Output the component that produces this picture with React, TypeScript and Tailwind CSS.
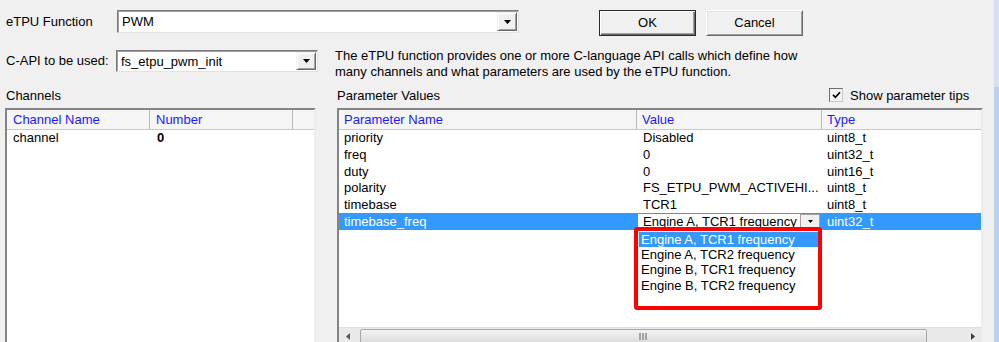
import React from "react";

const FONT = "font-['Liberation_Sans',Arial,sans-serif]";

const DownArrow = ({ small }: { small?: boolean }) =>
  small ? (
    <svg width="5" height="3" viewBox="0 0 5 3">
      <path d="M0 0H5L2.5 3Z" fill="#000" />
    </svg>
  ) : (
    <svg width="7" height="4" viewBox="0 0 7 4">
      <path d="M0 0H7L3.5 4Z" fill="#000" />
    </svg>
  );

// classic raised button face used inside the combo boxes
const ComboButton = ({ className }: { className: string }) => (
  <div
    className={`flex items-center justify-center bg-[#f0f0f0] border border-t-[#f0f0f0] border-l-[#f0f0f0] border-r-[#696969] border-b-[#696969] shadow-[inset_1px_1px_0_#ffffff,inset_-1px_-1px_0_#a0a0a0] ${className}`}
  >
    <DownArrow />
  </div>
);

const Combo = ({ className, value }: { className: string; value: string }) => (
  <div
    className={`flex bg-white border border-t-[#7a7a7a] border-l-[#7a7a7a] border-r-[#e3e3e3] border-b-[#e3e3e3] shadow-[inset_1px_1px_0_#a0a0a0] ${className}`}
  >
    <div className="flex-1 flex items-center pl-[4px] leading-none">{value}</div>
    <ComboButton className="w-[20px] my-[1px] mr-[1px]" />
  </div>
);

const rows = [
  { name: "priority", value: "Disabled", type: "uint8_t", h: "h-[16px]" },
  { name: "freq", value: "0", type: "uint32_t", h: "h-[17px]" },
  { name: "duty", value: "0", type: "uint16_t", h: "h-[17px]" },
  { name: "polarity", value: "FS_ETPU_PWM_ACTIVEHI...", type: "uint8_t", h: "h-[16px]" },
  { name: "timebase", value: "TCR1", type: "uint8_t", h: "h-[17px]" },
];

const options = [
  { label: "Engine A, TCR1 frequency", h: "h-[15px]", on: true },
  { label: "Engine A, TCR2 frequency", h: "h-[15px]", on: false },
  { label: "Engine B, TCR1 frequency", h: "h-[16px]", on: false },
  { label: "Engine B, TCR2 frequency", h: "h-[16px]", on: false },
];

const HeaderCell = ({ className, label }: { className: string; label: string }) => (
  <div className={`flex items-center text-[#1a1aff] border-r border-[#b9b9b9] ${className}`}>
    {label}
  </div>
);

export default function App() {
  return (
    <div className={`w-[999px] h-[342px] overflow-hidden flex bg-[#f0f0f0] text-[13px] text-black ${FONT}`}>
      <div className="w-[994px] flex flex-col">
        {/* eTPU function row */}
        <div className="shrink-0 flex items-start pt-[10px]">
          <div className="w-[117px] h-[23px] pl-[6px] flex items-center">eTPU Function</div>
          <Combo className="w-[402px] h-[23px]" value="PWM" />
          <div className="ml-[80px] flex gap-[10px]">
            <button className="w-[97px] h-[26px] bg-[#f0f0f0] border border-[#2a2a2a] shadow-[inset_1px_1px_0_#ffffff,inset_-1px_-1px_0_#696969,inset_-2px_-2px_0_#a0a0a0]">
              OK
            </button>
            <button className="w-[97px] h-[26px] bg-[#f0f0f0] border border-t-white border-l-white border-r-[#696969] border-b-[#696969] shadow-[inset_1px_1px_0_#e3e3e3,inset_-1px_-1px_0_#a0a0a0]">
              Cancel
            </button>
          </div>
        </div>

        {/* C-API row */}
        <div className="shrink-0 flex items-start mt-[12px]">
          <div className="w-[116px] h-[22px] mt-[2px] pl-[6px] flex items-center">C-API to be used:</div>
          <Combo className="w-[202px] h-[22px] mt-[2px]" value="fs_etpu_pwm_init" />
          <div className="ml-[17px] leading-[16px]">
            <div>The eTPU function provides one or more C-language API calls which define how</div>
            <div>many channels and what parameters are used by the eTPU function.</div>
          </div>
        </div>

        {/* section labels */}
        <div className="shrink-0 flex items-start mt-[8px] h-[20px] leading-[16px]">
          <div className="w-[337px] pl-[6px]">Channels</div>
          <div className="w-[492px]">Parameter Values</div>
          <div className="w-[14px] h-[14px] bg-[#f4f4f4] border border-t-[#6d6d6d] border-l-[#6d6d6d] border-r-[#c8c8c8] border-b-[#c8c8c8] flex items-center justify-center">
            <svg width="9" height="8" viewBox="0 0 9 8">
              <path d="M1 3.8L3.4 6.3L8 1.2" stroke="#000" strokeWidth="1.7" fill="none" />
            </svg>
          </div>
          <div className="ml-[7px]">Show parameter tips</div>
        </div>

        {/* list boxes */}
        <div className="shrink-0 flex items-start">
          {/* channels */}
          <div className="ml-[5px] w-[311px] h-[238px] flex flex-col bg-white border-2 border-t-[#848484] border-l-[#848484] border-r-[#ececec] border-b-[#ececec]">
            <div className="h-[20px] flex bg-[#f5f5f5] border-b border-[#c9c9c9]">
              <HeaderCell className="w-[143px] pl-[6px]" label="Channel Name" />
              <HeaderCell className="w-[143px] pl-[6px]" label="Number" />
              <div className="flex-1" />
            </div>
            <div className="h-[16px] flex items-center">
              <div className="w-[143px] pl-[6px]">channel</div>
              <div className="pl-[7px] font-bold">0</div>
            </div>
          </div>

          {/* parameter values */}
          <div className="ml-[21px] w-[646px] h-[238px] flex flex-col bg-white border-2 border-t-[#848484] border-l-[#848484] border-r-[#ececec] border-b-[#ececec]">
            <div className="h-[20px] flex bg-[#f5f5f5] border-b border-[#c9c9c9]">
              <HeaderCell className="w-[298px] pl-[5px]" label="Parameter Name" />
              <HeaderCell className="w-[185px] pl-[5px]" label="Value" />
              <div className="flex-1 flex items-center pl-[5px] text-[#1a1aff]">Type</div>
            </div>

            <div className="flex-1 relative">
              {rows.map((r) => (
                <div key={r.name} className={`flex items-center ${r.h}`}>
                  <div className="w-[298px] pl-[5px]">{r.name}</div>
                  <div className="w-[185px] pl-[6px] whitespace-nowrap">{r.value}</div>
                  <div className="pl-[5px]">{r.type}</div>
                </div>
              ))}
              <div className="flex h-[17px] bg-[#3399ff] text-white">
                <div className="w-[298px] pl-[5px] flex items-center">timebase_freq</div>
                <div className="w-[185px] flex py-[1px] pl-[1px] pr-[2px]">
                  <div className="flex-1 flex bg-white text-black">
                    <div className="flex-1 flex items-center pl-[5px]">Engine A, TCR1 frequency</div>
                    <div className="w-[20px] flex items-center justify-center bg-[#f0f0f0] border border-[#a0a0a0]">
                      <DownArrow small />
                    </div>
                  </div>
                </div>
                <div className="pl-[5px] flex items-center">uint32_t</div>
              </div>

              {/* open drop-down list, outlined in red */}
              <div className="absolute left-[295px] top-[97px] w-[188px] h-[83px] border-4 border-[#ff0000] rounded-[3px] bg-white pt-[1px] pl-[1px]">
                {options.map((o) => (
                  <div
                    key={o.label}
                    className={`flex items-center pl-[2px] ${o.h} ${o.on ? "bg-[#3399ff] text-white" : ""}`}
                  >
                    {o.label}
                  </div>
                ))}
              </div>
            </div>

            {/* horizontal scrollbar */}
            <div className="h-[17px] flex bg-[#e9e9e9] border-t border-[#e0e0e0]">
              <div className="w-[17px] flex items-center justify-center">
                <svg width="4" height="7" viewBox="0 0 4 7">
                  <path d="M4 0V7L0 3.5Z" fill="#5a5a5a" />
                </svg>
              </div>
              <div className="flex-1 flex items-center pl-[4px]">
                <div className="w-[567px] h-[15px] rounded-[2px] border border-[#a8a8a8] bg-gradient-to-b from-[#f2f2f2] to-[#dcdcdc] flex items-center justify-center">
                  <svg width="9" height="7" viewBox="0 0 9 7">
                    <path d="M1 0V7M4 0V7M7 0V7" stroke="#7a7a7a" strokeWidth="1.2" />
                  </svg>
                </div>
              </div>
              <div className="w-[17px] flex items-center justify-center">
                <svg width="4" height="7" viewBox="0 0 4 7">
                  <path d="M0 0V7L4 3.5Z" fill="#3a3a3a" />
                </svg>
              </div>
            </div>
          </div>
        </div>
      </div>

      {/* window frame edge */}
      <div className="w-[5px] flex flex-col">
        <div className="h-[87px] bg-[#d3e2f2]" />
        <div className="flex-1 bg-[#b9d1ea]" />
      </div>
    </div>
  );
}
